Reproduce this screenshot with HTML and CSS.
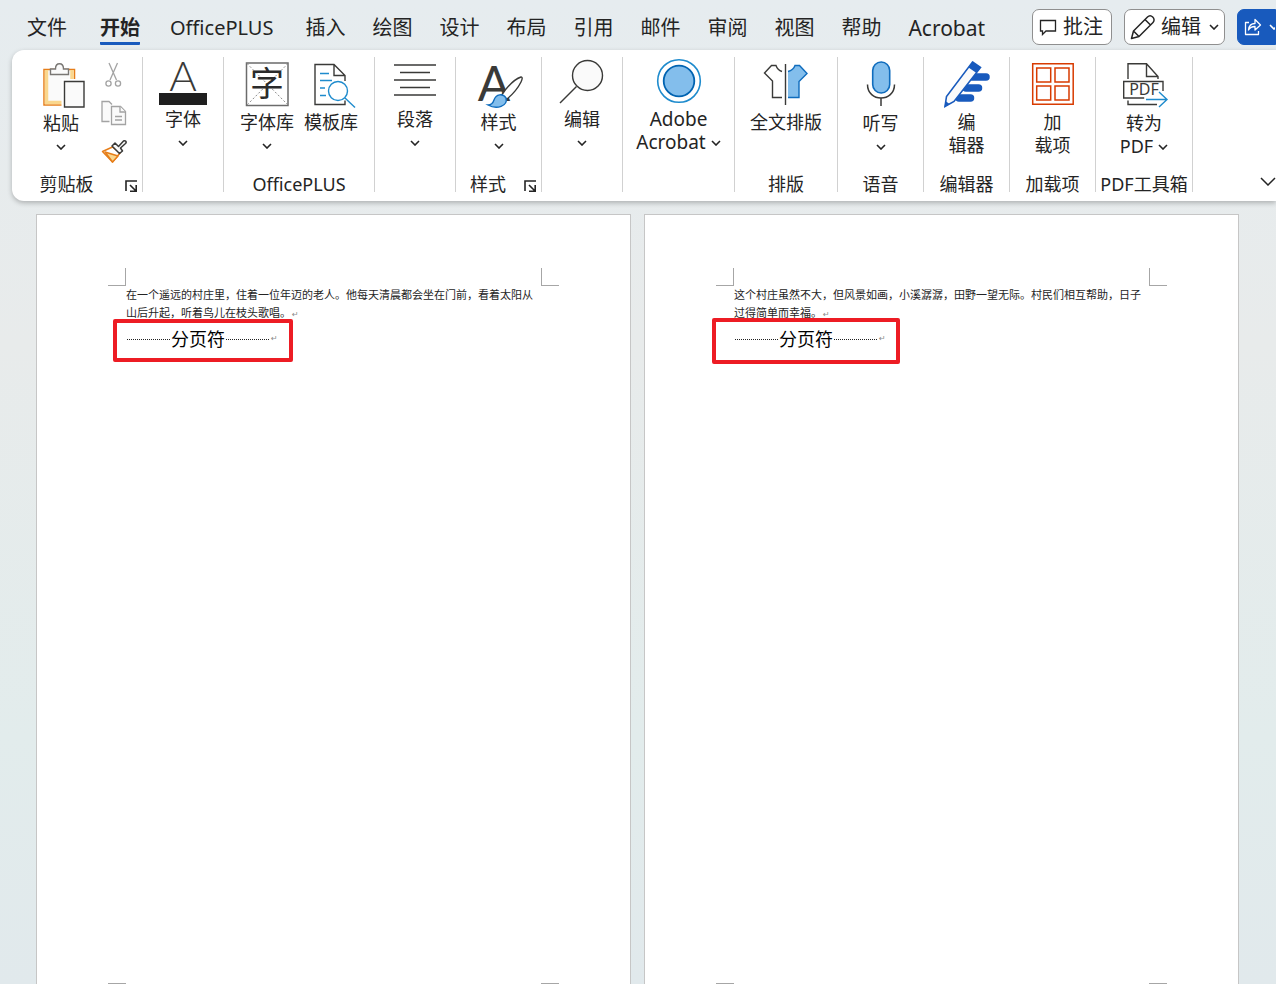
FILE: index.html
```html
<!DOCTYPE html>
<html lang="zh-CN">
<head>
    <meta charset="UTF-8">
    <meta name="viewport" content="width=device-width, initial-scale=1.0">
    <title>文档</title>
    <link rel="stylesheet" href="styles.css">
</head>
<body>
    <header class="topbar">
        <nav class="tabs">
            <a href="#" class="tab file">文件</a>
            <a href="#" class="tab active">开始</a>
            <a href="#" class="tab plus">OfficePLUS</a>
            <a href="#" class="tab">插入</a>
            <a href="#" class="tab">绘图</a>
            <a href="#" class="tab">设计</a>
            <a href="#" class="tab">布局</a>
            <a href="#" class="tab">引用</a>
            <a href="#" class="tab">邮件</a>
            <a href="#" class="tab">审阅</a>
            <a href="#" class="tab">视图</a>
            <a href="#" class="tab">帮助</a>
            <a href="#" class="tab acrobat">Acrobat</a>
        </nav>
        <div class="actions">
            <button class="action comment">
                <svg width="18" height="18" viewBox="0 0 18 18"><path d="M1.5 2.5h15v10.500H7L3.500 16.500V13h-2z" fill="none" stroke="#242424" stroke-width="1.300"/></svg>
                批注
            </button>
            <button class="action edit">
                <svg width="26" height="26" viewBox="0 0 26 26"><path d="M1.500 24.500L3.500 17 17.500 3C19 1.500 21 1.300 22.700 3S24.500 7 23 8.500L9 22.500zM15 5.500l5.500 5.500M3.500 17l5.500 5.500" fill="none" stroke="#242424" stroke-width="1.500" stroke-linejoin="round"/></svg>
                编辑
                <svg class="chev" width="10" height="6" viewBox="0 0 10 6"><path d="M1 1l4 4 4-4" fill="none" stroke="#242424" stroke-width="1.600"/></svg>
            </button>
            <button class="action share" aria-label="共享">
                <svg width="18" height="18" viewBox="0 0 18 18"><path d="M5 4.500H1.500v12h13V13M4.500 12c.5-4.500 3-6.500 6.500-6.500v-4L16.500 7 11 12V8.500c-3 0-5 .8-6.500 3.500z" fill="none" stroke="#fff" stroke-width="1.300" stroke-linejoin="round"/></svg>
                <svg width="10" height="6" viewBox="0 0 10 6"><path d="M1 1l4 4 4-4" fill="none" stroke="#fff" stroke-width="1.600"/></svg>
            </button>
        </div>
    </header>

    <section class="ribbon">
        <div class="group">
            <div class="commands clipboard">
                <button class="cmd low">
                    <svg class="icon" width="48" height="54" viewBox="0 0 48 54">
                        <path d="M7 12.500h30.500v35.500H7z" fill="#fafafa" stroke="#e67e1a" stroke-width="1.500"/>
                        <path d="M9.500 13v32.500h18M35 13v11" fill="none" stroke="#fad78e" stroke-width="3.500"/>
                        <path d="M13.500 12h5c0-7 8-7 8 0h5v5.500h-18z" fill="#fafafa" stroke="#797774" stroke-width="1.400"/>
                        <path d="M24.500 22h25v30h-25z" fill="#fff"/>
                        <path d="M27.500 24.500h19.500v25.500H27.500z" fill="#fafafa" stroke="#3a3a38" stroke-width="1.400"/>
                    </svg>
                    <span>粘贴</span>
                    <svg class="chev" width="10" height="6" viewBox="0 0 10 6"><path d="M1 1l4 4 4-4"/></svg>
                </button>
                <div class="small-tools">
                    <button class="tool" aria-label="剪切">
                        <svg width="24" height="26" viewBox="0 0 24 26" fill="none" stroke="#a3a3a3" stroke-width="1.300"><path d="M8 1l7.500 17M16.500 1L9 18"/><circle cx="7.500" cy="21.500" r="2.600"/><circle cx="17" cy="21.500" r="2.600"/></svg>
                    </button>
                    <button class="tool" aria-label="复制">
                        <svg width="26" height="26" viewBox="0 0 26 26" fill="#fafafa" stroke="#a3a3a3" stroke-width="1.300"><path d="M8.500 21.500H1V1.500h7l3 3"/><path d="M10.500 6.500h9l5 5v13h-14z"/><path d="M19 6.500V12h5.500M14 16.500h7M14 20h7"/></svg>
                    </button>
                    <button class="tool" aria-label="格式刷">
                        <svg width="26" height="26" viewBox="0 0 26 26" stroke-width="1.500" stroke-linejoin="round"><path d="M11.500 9L1.500 13.500l10 10.500 7.500-9z" fill="#fff" stroke="#e67e1a"/><path d="M4 14l13 4-5.500 6z" fill="#fad78e" stroke="#e67e1a"/><path d="M11 8l3-3 3.500 3.500 5-5.500c2-1 3.500 1 2 2.500L19.500 10l2 3-3 2.500z" fill="#fafafa" stroke="#3a3a38"/></svg>
                    </button>
                </div>
            </div>
            <div class="group-name"><span>剪贴板</span>
                <button class="launcher" aria-label="剪贴板选项"><svg width="12" height="12" viewBox="0 0 12 12"><path d="M1 11V1h11M5 5l6 6M11.200 5v6.200H5" fill="none" stroke="#242424" stroke-width="1.600"/></svg></button>
            </div>
        </div>

        <div class="group compact">
            <div class="commands">
                <button class="cmd low">
                    <svg class="icon" width="48" height="50" viewBox="0 0 48 50">
                        <text x="24" y="34" class="letter thin">A</text>
                        <path d="M0 36h48v12H0z" fill="#1f1f1f"/>
                    </svg>
                    <span>字体</span>
                    <svg class="chev" width="10" height="6" viewBox="0 0 10 6"><path d="M1 1l4 4 4-4"/></svg>
                </button>
            </div>
        </div>

        <div class="group">
            <div class="commands">
                <button class="cmd">
                    <svg class="icon" width="48" height="54" viewBox="0 0 48 54">
                        <path d="M3.500 6h41.500v42.500H3.500z" fill="#fff" stroke="#6b6b6b" stroke-width="1.500"/>
                        <path d="M4 6.500l41 41.500M45 6.500L4 48" stroke="#8a8a8a" stroke-dasharray="2 2"/>
                        <text x="24" y="39" class="glyph">字</text>
                    </svg>
                    <span>字体库</span>
                    <svg class="chev" width="10" height="6" viewBox="0 0 10 6"><path d="M1 1l4 4 4-4"/></svg>
                </button>
                <button class="cmd">
                    <svg class="icon" width="48" height="54" viewBox="0 0 48 54" fill="none" stroke-width="1.400">
                        <path d="M38 24V18.500L27 7.500H8v40h30v-4M27 7.500v11h11" stroke="#3a3a38"/>
                        <path d="M13 16.500h9M13 23.500h12M13 31h5M13 38.500h6" stroke="#1e8bcd"/>
                        <circle cx="31" cy="34" r="9.500" fill="#fff" stroke="#1e8bcd"/><path d="M38 41l10 9.500" stroke="#1e8bcd"/>
                    </svg>
                    <span>模板库</span>
                </button>
            </div>
            <div class="group-name"><span>OfficePLUS</span></div>
        </div>

        <div class="group compact">
            <div class="commands">
                <button class="cmd low">
                    <svg class="icon" width="48" height="50" viewBox="0 0 48 50"><path d="M3 8h42M9 15.500h30M3 23h42M9 30.500h30M3 38h42" stroke="#3a3a38" stroke-width="1.500"/></svg>
                    <span>段落</span>
                    <svg class="chev" width="10" height="6" viewBox="0 0 10 6"><path d="M1 1l4 4 4-4"/></svg>
                </button>
            </div>
        </div>

        <div class="group">
            <div class="commands">
                <button class="cmd">
                    <svg class="icon" width="48" height="54" viewBox="0 0 48 54">
                        <text x="19" y="44" class="letter regular">A</text>
                        <path d="M26 39C32 30 40 22 46 20c2 0 1 3 0 5-3 6-8 12-14 17z" fill="#fff" stroke="#3a3a38" stroke-width="1.400"/>
                        <path d="M13 48c4 0 5-2 6-5 2-6 9-7 12-2 2 8-9 12-18 7z" fill="#83beec" stroke="#0f6cbd" stroke-width="1.400"/>
                    </svg>
                    <span>样式</span>
                    <svg class="chev" width="10" height="6" viewBox="0 0 10 6"><path d="M1 1l4 4 4-4"/></svg>
                </button>
            </div>
            <div class="group-name"><span>样式</span>
                <button class="launcher" aria-label="样式选项"><svg width="12" height="12" viewBox="0 0 12 12"><path d="M1 11V1h11M5 5l6 6M11.200 5v6.200H5" fill="none" stroke="#242424" stroke-width="1.600"/></svg></button>
            </div>
        </div>

        <div class="group compact">
            <div class="commands">
                <button class="cmd low">
                    <svg class="icon" width="48" height="50" viewBox="0 0 48 50" stroke="#3a3a38" stroke-width="1.400"><circle cx="29.500" cy="18.500" r="15" fill="#fafafa"/><path d="M18.500 29.500L2 46"/></svg>
                    <span>编辑</span>
                    <svg class="chev" width="10" height="6" viewBox="0 0 10 6"><path d="M1 1l4 4 4-4"/></svg>
                </button>
            </div>
        </div>

        <div class="group compact">
            <div class="commands">
                <button class="cmd low adobe">
                    <svg class="icon" width="48" height="50" viewBox="0 0 48 50"><circle cx="24" cy="24" r="21.300" fill="#fff" stroke="#1e8bcd" stroke-width="1.600"/><circle cx="24" cy="24" r="15.300" fill="#83beec" stroke="#0063b1" stroke-width="1.800"/></svg>
                    <span>Adobe</span>
                    <span class="with-chev">Acrobat <svg width="10" height="6" viewBox="0 0 10 6"><path d="M1 1l4 4 4-4"/></svg></span>
                </button>
            </div>
        </div>

        <div class="group">
            <div class="commands">
                <button class="cmd">
                    <svg class="icon" width="48" height="54" viewBox="0 0 48 54" stroke-width="1.400">
                        <path d="M20 14.500c-3-1-5-3-6-6H9.500L2.500 16l8 8v16.500H20" fill="#fff" stroke="#3a3a38"/>
                        <path d="M26 14.500c4-1 6-3 7-6h4.500l7.500 8-8 8v16H26z" fill="#83beec"/>
                        <path d="M26 14.500c4-1 6-3 7-6h4.500l7.500 8-8 8v16H26" fill="none" stroke="#0f6cbd"/>
                        <path d="M23.500 7v41" stroke="#3a3a38"/>
                    </svg>
                    <span>全文排版</span>
                </button>
            </div>
            <div class="group-name"><span>排版</span></div>
        </div>

        <div class="group">
            <div class="commands">
                <button class="cmd low">
                    <svg class="icon" width="48" height="54" viewBox="0 0 48 54"><rect x="15.700" y="5" width="17" height="31" rx="8.500" fill="#83beec" stroke="#0f6cbd" stroke-width="1.600"/><path d="M10.500 27.500c0 18 27 18 27 0M24 41.500V49" fill="none" stroke="#3a3a38" stroke-width="1.500"/></svg>
                    <span>听写</span>
                    <svg class="chev" width="10" height="6" viewBox="0 0 10 6"><path d="M1 1l4 4 4-4"/></svg>
                </button>
            </div>
            <div class="group-name"><span>语音</span></div>
        </div>

        <div class="group">
            <div class="commands">
                <button class="cmd">
                    <svg class="icon" width="48" height="54" viewBox="0 0 48 54">
                        <path d="M29 20h14M23 31h12.500M16 41h11.500" stroke="#185abd" stroke-width="7.500" stroke-linecap="round"/>
                        <path d="M29.500 5l8 5.500L11 44.500 2 49.500l1.500-10z" fill="#fafafa" stroke="#185abd" stroke-width="1.600"/>
                        <path d="M29.500 5l8 5.500-4 5.500-8-5.500zM2.500 44l4 3-5 3z" fill="#185abd"/>
                    </svg>
                    <span>编</span>
                    <span>辑器</span>
                </button>
            </div>
            <div class="group-name"><span>编辑器</span></div>
        </div>

        <div class="group">
            <div class="commands">
                <button class="cmd">
                    <svg class="icon" width="48" height="54" viewBox="0 0 48 54" fill="none" stroke="#d83b01" stroke-width="1.500"><path d="M3.700 6.700h40.500v40.500H3.700zM7.700 11h14v14h-14zM26 11h14v14H26zM7.700 29h14v14h-14zM26 29h14v14H26z"/></svg>
                    <span>加</span>
                    <span>载项</span>
                </button>
            </div>
            <div class="group-name"><span>加载项</span></div>
        </div>

        <div class="group">
            <div class="commands">
                <button class="cmd low">
                    <svg class="icon" width="48" height="54" viewBox="0 0 48 54" fill="none" stroke="#3a3a38" stroke-width="1.400">
                        <path d="M8 22V6.700h18.500L38 19.500V22M26.500 6.700v12.800H38M43 34V24.500H3.700V41h20.500M8 43.500v4h29"/>
                        <text x="24" y="38" class="pdf">PDF</text>
                        <path d="M26 42.500h21M39 35l8 7.500-8 7.500" stroke="#1e8bcd"/>
                    </svg>
                    <span>转为</span>
                    <span class="with-chev">PDF <svg width="10" height="6" viewBox="0 0 10 6"><path d="M1 1l4 4 4-4"/></svg></span>
                </button>
            </div>
            <div class="group-name"><span>PDF工具箱</span></div>
        </div>

        <button class="collapse" aria-label="折叠功能区">
            <svg width="16" height="9" viewBox="0 0 16 9"><path d="M1 1l7 7 7-7" fill="none" stroke="#242424" stroke-width="1.500"/></svg>
        </button>
    </section>

    <main class="pages">
        <article class="page">
            <div class="content">
                <i class="corner tl"></i><i class="corner tr"></i><i class="corner bl"></i><i class="corner br"></i>
                <p>在一个遥远的村庄里，住着一位年迈的老人。他每天清晨都会坐在门前，看着太阳从山后升起，听着鸟儿在枝头歌唱。<span class="return">↵</span></p>
                <div class="page-break">
                    <span class="dots"></span>分页符<span class="dots"></span><span class="return">↵</span>
                    <div class="callout"></div>
                </div>
            </div>
        </article>
        <article class="page">
            <div class="content">
                <i class="corner tl"></i><i class="corner tr"></i><i class="corner bl"></i><i class="corner br"></i>
                <p>这个村庄虽然不大，但风景如画，小溪潺潺，田野一望无际。村民们相互帮助，日子过得简单而幸福。<span class="return">↵</span></p>
                <div class="page-break">
                    <span class="dots"></span>分页符<span class="dots"></span><span class="return">↵</span>
                    <div class="callout wide"></div>
                </div>
            </div>
        </article>
    </main>
</body>
</html>
```

FILE: styles.css
```css
* {
    margin: 0;
    padding: 0;
    box-sizing: border-box;
}

body {
    display: flex;
    flex-direction: column;
    height: 100vh;
    overflow: hidden;
    font-family: "Noto Sans", "Noto Sans CJK SC", sans-serif;
    color: #242424;
    background: linear-gradient(180deg, #e6ecef 0%, #e8ebeb 35%, #e2ecec 75%, #e1e9ec 100%);
}

button {
    border: none;
    background: none;
    font: inherit;
    color: inherit;
    cursor: pointer;
}

/* Top bar */
.topbar {
    display: flex;
    justify-content: space-between;
    height: 50px;
    padding-left: 27px;
    white-space: nowrap;
}

.tabs {
    display: flex;
    gap: 27px;
    padding-top: 12px;
}

.tab {
    height: 33px;
    font-size: 20px;
    line-height: 32px;
    color: #242424;
    text-decoration: none;
}

.file {
    margin-right: 6px;
}

.plus {
    margin: 0 5px 0 3px;
}

.acrobat {
    font-size: 21px;
}

.active {
    font-weight: bold;
    border-bottom: 3px solid #185abd;
    border-radius: 1px;
}

.actions {
    display: flex;
    gap: 12px;
    padding-top: 9px;
}

.action {
    display: flex;
    align-items: center;
    height: 36px;
    font-size: 20px;
    line-height: 30px;
    background: white;
    border: 1px solid #8f8f8f;
    border-radius: 7px;
}

.comment {
    gap: 6px;
    padding: 0 8px 0 6px;
}

.edit {
    gap: 5px;
    padding: 0 5px;
}

.edit .chev {
    margin-left: 3px;
}

.share {
    width: 39px;
    gap: 7px;
    padding-left: 6px;
    overflow: hidden;
    background: #185abd;
    border-color: #185abd;
    border-radius: 7px 0 0 7px;
}

.share svg {
    flex: none;
}

/* Ribbon */
.ribbon {
    display: grid;
    grid-template-columns: 131px 81px 151px 81px 86px 81px 112px 103px 86px 86px 86px 97px 1fr;
    margin-left: 12px;
    padding: 7px 0 9px;
    background: white;
    border-radius: 12px 0 0 12px;
    box-shadow: 0 2px 5px rgba(0, 0, 0, 0.25);
}

.group {
    display: flex;
    flex-direction: column;
    justify-content: space-between;
    height: 135px;
    border-right: 1px solid #d1d1d1;
    font-size: 18px;
    white-space: nowrap;
}

.commands {
    display: flex;
    justify-content: center;
    align-items: flex-start;
}

.clipboard {
    gap: 10px;
    padding-left: 4px;
}

.cmd {
    display: flex;
    flex-direction: column;
    align-items: center;
    min-width: 60px;
    padding: 0 5px;
    line-height: 23px;
}

.icon {
    height: 54px;
    overflow: visible;
}

.compact .icon {
    height: 50px;
}

.low .icon {
    margin-bottom: 1px;
}

.cmd .chev {
    margin-top: 9px;
}

.adobe {
    font-size: 19px;
}

.chev path,
.with-chev path {
    fill: none;
    stroke: #242424;
    stroke-width: 1.6px;
}

.with-chev {
    display: flex;
    align-items: center;
    gap: 5px;
}

.letter {
    font-family: Lato, sans-serif;
    text-anchor: middle;
    fill: #3a3a38;
}

.thin {
    font-size: 42px;
    font-weight: 300;
}

.regular {
    font-size: 48px;
}

.glyph {
    font-size: 34px;
    text-anchor: middle;
    fill: #2b2b2b;
}

.pdf {
    font-size: 16px;
    text-anchor: middle;
    fill: #3a3a38;
    stroke: none;
}

.small-tools {
    display: flex;
    flex-direction: column;
    gap: 12px;
    padding-top: 5px;
}

.tool {
    width: 26px;
    height: 26px;
}

.tool svg {
    display: block;
}

.group-name {
    display: flex;
    line-height: 16px;
}

.group-name span {
    flex: 1;
    text-align: center;
}

.launcher {
    height: 12px;
    margin: 4px 5px 0 4px;
}

.launcher svg {
    display: block;
}

.collapse {
    justify-self: end;
    align-self: end;
    height: 16px;
    margin-bottom: 7px;
}

/* Document pages */
.pages {
    flex: 1;
    display: grid;
    grid-template-columns: 1fr 1fr;
    gap: 13px;
    padding: 13px 37px 0 36px;
}

.page {
    padding: 71px 89px 0;
    background: white;
    border: 1px solid #c6c6c6;
    border-bottom: none;
}

.content {
    position: relative;
    height: 100%;
    font-size: 11px;
    line-height: 18px;
}

.corner {
    position: absolute;
    width: 18px;
    height: 18px;
    border: 0 solid #a6a6a6;
}

.tl {
    top: -18px;
    left: -18px;
    border-width: 0 1px 1px 0;
}

.tr {
    top: -18px;
    right: -18px;
    border-width: 0 0 1px 1px;
}

.bl {
    top: calc(100% - 1px);
    left: -18px;
    border-width: 1px 1px 0 0;
}

.br {
    top: calc(100% - 1px);
    right: -18px;
    border-width: 1px 0 0 1px;
}

.return {
    display: inline-block;
    margin-left: 1px;
    font-family: "DejaVu Sans", sans-serif;
    font-size: 8px;
    line-height: 10px;
    color: #8a8a8a;
}

.page-break {
    position: relative;
    display: flex;
    align-items: center;
    height: 34px;
    font-size: 18px;
    color: black;
}

.dots {
    width: 43px;
    margin: 0 1px;
    border-top: 1px dotted #222;
}

.callout {
    position: absolute;
    top: -3px;
    left: -13px;
    width: 180px;
    height: 43px;
    border: 4px solid #ed1c24;
    border-radius: 2px;
}

.callout.wide {
    top: -4px;
    left: -22px;
    width: 188px;
    height: 46px;
}
```
